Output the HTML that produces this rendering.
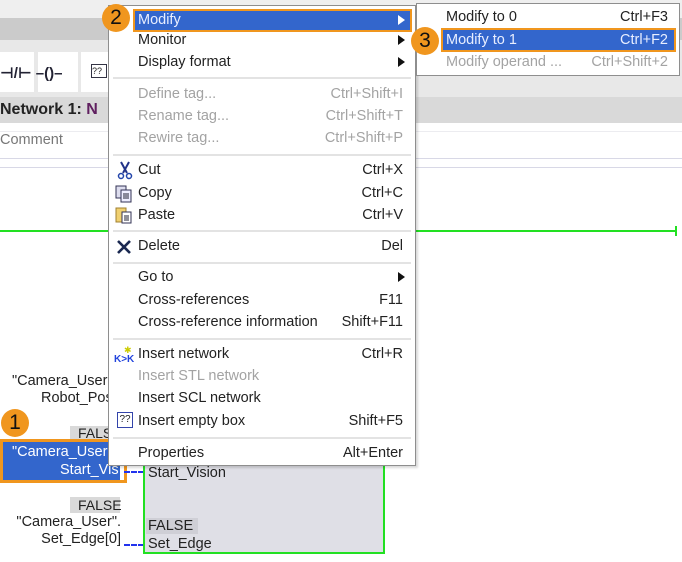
<!DOCTYPE html>
<html><head><meta charset="utf-8"><style>
*{margin:0;padding:0;box-sizing:border-box}
body{width:682px;height:562px;overflow:hidden;position:relative;background:#fff;font-family:"Liberation Sans","DejaVu Sans",sans-serif;font-size:14.5px;color:#222}
.a{position:absolute}
.menu{position:absolute;left:108px;top:5px;width:308px;height:461px;background:#fff;border:1px solid #8e8e8e;box-shadow:2px 2px 2px rgba(0,0,0,.15)}
.it{position:absolute;left:29px;right:12px;height:22px;line-height:22px;white-space:nowrap}
.it .k{position:absolute;right:0;top:0}
.dis{color:#a3a3a3}
.sep{position:absolute;left:4px;right:4px;height:2px;background:#e3e3e3}
.arr{position:absolute;right:-2px;top:6px;width:0;height:0;border-left:7px solid #111;border-top:5px solid transparent;border-bottom:5px solid transparent}
.num{position:absolute;width:28px;height:28px;border-radius:50%;background:#f0961e;color:#111;font-size:21px;text-align:center;line-height:28px}
.lbl{position:absolute;text-align:right;line-height:18px;white-space:nowrap}
</style></head><body>
<div class="a" style="left:0;top:0;width:682px;height:18px;background:#efefef"></div>
<div class="a" style="left:0;top:18px;width:682px;height:22px;background:#cbcbcb"></div>
<div class="a" style="left:0;top:40px;width:682px;height:57px;background:#e8e8e8"></div>
<div class="a" style="left:0;top:52px;width:34px;height:40px;background:#fff"></div>
<div class="a" style="left:38px;top:52px;width:40px;height:40px;background:#fff"></div>
<div class="a" style="left:81px;top:52px;width:30px;height:40px;background:#fff"></div>
<div class="a" style="left:0;top:64px;font-size:15px;font-weight:bold;color:#223">⊣/⊢ –()–</div>
<div class="a" style="left:91px;top:64px;width:16px;height:14px;border:1px solid #334;font-size:9px;line-height:12px">??</div>
<div class="a" style="left:0;top:97px;width:682px;height:26px;background:#d9d9d9"></div>
<div class="a" style="left:0;top:101px;font-weight:bold;font-size:16px;color:#222">Network 1: <span style="color:#602060">N</span></div>
<div class="a" style="left:0;top:131px;width:682px;height:1px;background:#ececf0"></div>
<div class="a" style="left:0;top:132px;color:#777">Comment</div>
<div class="a" style="left:0;top:158px;width:682px;height:1px;background:#d8d8e6"></div>
<div class="a" style="left:0;top:167px;width:682px;height:1px;background:#d8d8e6"></div>
<div class="a" style="left:0;top:230px;width:676px;height:2px;background:#22e022"></div>
<div class="a" style="left:675px;top:226px;width:2px;height:10px;background:#22e022"></div>
<div class="lbl" style="left:12px;top:372px">"Camera_User</div>
<div class="lbl" style="left:41px;top:389px">Robot_Pos</div>
<div class="a" style="left:70px;top:426px;width:50px;height:15px;background:#d9d9d9;font-size:14px;line-height:15px;padding-left:8px">FALS</div>
<div class="a" style="left:3px;top:442px;width:118px;height:38px;background:#3366cc"></div>
<div class="lbl" style="left:12px;top:443px;color:#fff">"Camera_User</div>
<div class="lbl" style="left:60px;top:461px;color:#fff">Start_Vis</div>
<div class="a" style="left:120px;top:440px;width:4px;height:43px;background:#fff"></div>
<div class="a" style="left:0;top:439px;width:127px;height:44px;border:3px solid #f0961e"></div>
<div class="a" style="left:70px;top:497px;width:50px;height:16px;background:#d9d9d9;font-size:14px;line-height:16px;padding-left:8px">FALSE</div>
<div class="lbl" style="right:561px;top:513px">"Camera_User".</div>
<div class="lbl" style="right:561px;top:530px">Set_Edge[0]</div>
<div class="a" style="left:124px;top:471px;width:20px;border-top:2px dashed #2233ee"></div>
<div class="a" style="left:124px;top:544px;width:20px;border-top:2px dashed #2233ee"></div>
<div class="a" style="left:143px;top:440px;width:242px;height:114px;background:#dfdfe6;border:2px solid #22e022"></div>
<div class="a" style="left:148px;top:465px">Start_Vision</div>
<div class="a" style="left:146px;top:518px;width:52px;height:16px;background:#cfcfd6;line-height:16px;padding-left:2px">FALSE</div>
<div class="a" style="left:148px;top:536px">Set_Edge</div>
<div class="menu">
 <div class="a" style="left:24px;top:3px;width:279px;height:23px;background:#3366cc;border:2px solid #f0961e"></div>
 <div class="it" style="top:3px;color:#e8eeff">Modify<span class="arr" style="border-left-color:#fff"></span></div>
 <div class="it" style="top:23px">Monitor<span class="arr"></span></div>
 <div class="it" style="top:45px">Display format<span class="arr"></span></div>
 <div class="sep" style="top:71px"></div>
 <div class="it dis" style="top:77px">Define tag...<span class="k">Ctrl+Shift+I</span></div>
 <div class="it dis" style="top:99px">Rename tag...<span class="k">Ctrl+Shift+T</span></div>
 <div class="it dis" style="top:121px">Rewire tag...<span class="k">Ctrl+Shift+P</span></div>
 <div class="sep" style="top:148px"></div>
 <div class="it" style="top:153px">Cut<span class="k">Ctrl+X</span></div>
 <div class="it" style="top:176px">Copy<span class="k">Ctrl+C</span></div>
 <div class="it" style="top:198px">Paste<span class="k">Ctrl+V</span></div>
 <div class="sep" style="top:224px"></div>
 <div class="it" style="top:229px">Delete<span class="k">Del</span></div>
 <div class="sep" style="top:256px"></div>
 <div class="it" style="top:260px">Go to<span class="arr"></span></div>
 <div class="it" style="top:283px">Cross-references<span class="k">F11</span></div>
 <div class="it" style="top:305px">Cross-reference information<span class="k">Shift+F11</span></div>
 <div class="sep" style="top:332px"></div>
 <div class="it" style="top:337px">Insert network<span class="k">Ctrl+R</span></div>
 <div class="it dis" style="top:359px">Insert STL network</div>
 <div class="it" style="top:381px">Insert SCL network</div>
 <div class="it" style="top:404px">Insert empty box<span class="k">Shift+F5</span></div>
 <div class="sep" style="top:431px"></div>
 <div class="it" style="top:436px">Properties<span class="k">Alt+Enter</span></div>
 <svg class="a" style="left:7px;top:155px" width="18" height="20"><path d="M5 1L11 12M13 1L7 12" stroke="#223388" stroke-width="2"/><circle cx="5" cy="15" r="2.5" fill="none" stroke="#2244aa" stroke-width="1.5"/><circle cx="13" cy="15" r="2.5" fill="none" stroke="#2244aa" stroke-width="1.5"/></svg>
 <svg class="a" style="left:6px;top:179px" width="18" height="18"><rect x="1" y="1" width="10" height="12" fill="#dde" stroke="#335"/><rect x="6" y="5" width="10" height="12" fill="#eef" stroke="#335"/><path d="M8 9h6M8 11h6M8 13h6" stroke="#223"/></svg>
 <svg class="a" style="left:6px;top:200px" width="18" height="18"><rect x="1" y="2" width="10" height="14" fill="#f0d070" stroke="#a08030"/><rect x="7" y="6" width="9" height="11" fill="#fff" stroke="#335"/><path d="M9 10h5M9 12h5M9 14h5" stroke="#223"/></svg>
 <svg class="a" style="left:7px;top:233px" width="16" height="16"><path d="M2 2L14 14M14 2L2 14" stroke="#1a2850" stroke-width="2.6"/></svg>
 <svg class="a" style="left:5px;top:339px" width="20" height="18"><text x="10" y="8" font-size="9" fill="#cc0">✱</text><text x="0" y="17" font-size="10" font-weight="bold" fill="#2244dd" font-family="Liberation Sans">K&gt;K</text></svg>
 <div class="a" style="left:8px;top:406px;width:16px;height:16px;border:1px solid #3344aa;font-size:10px;line-height:14px;text-align:center">??</div>
</div>
<div class="a" style="left:416px;top:3px;width:264px;height:73px;background:#fff;border:1px solid #8e8e8e"></div>
<div class="a" style="left:446px;top:8px;width:222px;line-height:18px">Modify to 0<span style="float:right">Ctrl+F3</span></div>
<div class="a" style="left:441px;top:28px;width:235px;height:24px;background:#3366cc;border:2px solid #f0961e"></div>
<div class="a" style="left:446px;top:31px;width:222px;line-height:18px;color:#e8eeff">Modify to 1<span style="float:right">Ctrl+F2</span></div>
<div class="a" style="left:446px;top:53px;width:222px;line-height:18px;color:#a3a3a3;white-space:nowrap">Modify operand ...<span style="float:right">Ctrl+Shift+2</span></div>
<div class="num" style="left:102px;top:4px">2</div>
<div class="num" style="left:411px;top:27px">3</div>
<div class="num" style="left:1px;top:409px">1</div>
</body></html>
